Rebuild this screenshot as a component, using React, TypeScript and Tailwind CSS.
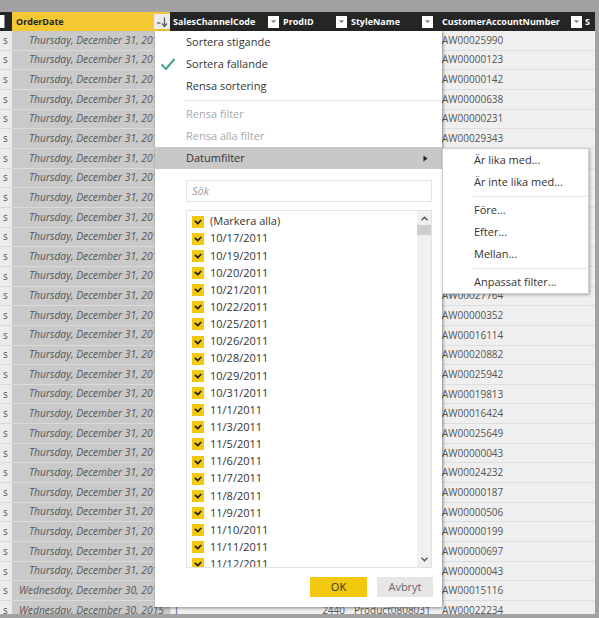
import React from 'react';

const FONT = "font-['Open_Sans',sans-serif]";

const CUSTOMERS = [
  'AW00025990', 'AW00000123', 'AW00000142', 'AW00000638', 'AW00000231', 'AW00029343',
  'AW00011235', 'AW00028854', 'AW00000412', 'AW00017719', 'AW00000566', 'AW00023017', 'AW00000098',
  'AW00027764', 'AW00000352', 'AW00016114', 'AW00020882', 'AW00025942', 'AW00019813', 'AW00016424',
  'AW00025649', 'AW00000043', 'AW00024232', 'AW00000187', 'AW00000506', 'AW00000199', 'AW00000697',
  'AW00000043', 'AW00015116', 'AW00022234',
];

const DATES = [
  '10/17/2011', '10/19/2011', '10/20/2011', '10/21/2011', '10/22/2011', '10/25/2011', '10/26/2011',
  '10/28/2011', '10/29/2011', '10/31/2011', '11/1/2011', '11/3/2011', '11/5/2011', '11/6/2011',
  '11/7/2011', '11/8/2011', '11/9/2011', '11/10/2011', '11/11/2011', '11/12/2011',
];

function DropButton() {
  return (
    <div className="w-[11px] h-[12px] bg-white flex items-center justify-center shrink-0">
      <svg viewBox="0 0 8 8" width="7" height="7" aria-hidden="true">
        <path d="M1 2.5h6L4 6Z" fill="#8a8a8a" />
      </svg>
    </div>
  );
}

function SortButton() {
  return (
    <div className="w-[16px] h-[15px] bg-[#ececec] flex items-center justify-center shrink-0">
      <svg viewBox="0 0 14 12" width="14" height="12" aria-hidden="true">
        <path d="M2 7h3.5" stroke="#555" strokeWidth="1.2" />
        <path d="M9.5 1.5v8" stroke="#555" strokeWidth="1.2" />
        <path d="M7 7.5l2.5 3 2.5-3" stroke="#555" strokeWidth="1.2" fill="none" />
      </svg>
    </div>
  );
}

function CheckBox() {
  return (
    <div className="w-[12px] h-[12px] bg-[#f2c811] flex items-center justify-center shrink-0">
      <svg viewBox="0 0 12 12" width="10" height="10" aria-hidden="true">
        <path d="M2.2 4.6l3.6 3.4 4-4.4" stroke="#1a1a1a" strokeWidth="2" fill="none" />
      </svg>
    </div>
  );
}

function Header() {
  return (
    <div className="flex h-[19px] bg-[#252525] text-white font-bold text-[9px] shrink-0">
      <div className="w-[12px] flex items-center">
        <div className="w-[5px] h-[13px] bg-white border-r border-[#888]" />
      </div>
      <div className="w-[158px] bg-[#f3c832] text-[#222] flex items-center pl-[4px]">
        <span className="flex-1">OrderDate</span>
        <SortButton />
      </div>
      <div className="w-[112px] flex items-center pl-[3px] pr-[3px]">
        <span className="flex-1">SalesChannelCode</span>
        <DropButton />
      </div>
      <div className="w-[66px] flex items-center pl-[1px] pr-[1px]">
        <span className="flex-1 overflow-hidden whitespace-nowrap">ProdID</span>
        <DropButton />
      </div>
      <div className="w-[89px] flex items-center pl-[3px] pr-[4px]">
        <span className="flex-1">StyleName</span>
        <DropButton />
      </div>
      <div className="w-[147px] flex items-center pl-[5px] pr-[2px]">
        <span className="flex-1 whitespace-nowrap">CustomerAccountNumber</span>
        <DropButton />
      </div>
      <div className="flex-1 flex items-center pl-[1px] overflow-hidden">S</div>
    </div>
  );
}

function Row({ i }: { i: number }) {
  const wed = i >= 28;
  return (
    <div className="flex h-[19.66px] shrink-0 text-[10px] text-[#555]">
      <div className="w-[12px] bg-[#ececec] border-b border-[#d9d9d9] flex items-center pl-[3px]">s</div>
      <div className="w-[158px] bg-[#c9c9c9] border-b border-[#dbdbdb] flex items-center justify-end pr-[6px] italic text-[10.3px] whitespace-nowrap overflow-hidden">
        {wed ? 'Wednesday, December 30, 2015' : 'Thursday, December 31, 2015'}
      </div>
      <div className="w-[112px] bg-[#efefef] border-b border-l border-[#dedede] flex items-center pl-[4px]">I</div>
      <div className="w-[66px] bg-[#efefef] border-b border-[#dedede] flex items-center justify-end pr-[3px]">2440</div>
      <div className="w-[89px] bg-[#efefef] border-b border-[#dedede] flex items-center pl-[6px]">Product0808031</div>
      <div className="w-[147px] bg-[#efefef] border-b border-[#dedede] flex items-center pl-[5px]">{CUSTOMERS[i]}</div>
      <div className="flex-1 bg-[#efefef] border-b border-[#dedede]" />
    </div>
  );
}

function MenuItem({ label, muted, check }: { label: string; muted?: boolean; check?: boolean }) {
  return (
    <div className={`h-[22px] flex items-center shrink-0 ${muted ? 'text-[#a8a8a8]' : 'text-[#333]'}`}>
      <div className="w-[31px] pl-[5px] flex items-center">
        {check && (
          <svg viewBox="0 0 16 14" width="16" height="14" aria-hidden="true">
            <path d="M1.5 7.5l4.5 4.5L14.5 2" stroke="#44a99a" strokeWidth="2.2" fill="none" />
          </svg>
        )}
      </div>
      <span>{label}</span>
    </div>
  );
}

function FilterPopup() {
  return (
    <div className="absolute left-[155px] top-[19px] w-[287px] h-[576px] bg-white shadow-[1px_1px_3px_rgba(0,0,0,0.45)] flex flex-col text-[11px]">
      <MenuItem label="Sortera stigande" />
      <MenuItem label="Sortera fallande" check />
      <MenuItem label="Rensa sortering" />
      <div className="h-[6px] flex items-center shrink-0">
        <div className="ml-[29px] mr-[2px] flex-1 h-px bg-[#e3e3e3]" />
      </div>
      <MenuItem label="Rensa filter" muted />
      <MenuItem label="Rensa alla filter" muted />
      <div className="h-[22px] bg-[#c8c8c8] flex items-center pl-[31px] pr-[14px] text-[#333] shrink-0">
        <span className="flex-1">Datumfilter</span>
        <svg viewBox="0 0 6 8" width="5" height="7" aria-hidden="true">
          <path d="M0.5 0.5L5.5 4L0.5 7.5Z" fill="#222" />
        </svg>
      </div>
      <div className="mt-[11px] ml-[31px] w-[246px] h-[22px] border border-[#e2e2e2] flex items-center pl-[5px] italic text-[#9a9a9a] shrink-0">
        Sök
      </div>
      <div className="mt-[8px] ml-[31px] w-[246px] h-[358px] border border-[#e2e2e2] flex shrink-0 overflow-hidden">
        <div className="flex-1 flex flex-col pt-[2px] overflow-hidden text-[#333]">
          {['(Markera alla)', ...DATES].map((d, i) => (
            <div key={i} className="h-[17.15px] flex items-center gap-[6px] pl-[5px] shrink-0">
              <CheckBox />
              <span>{d}</span>
            </div>
          ))}
        </div>
        <div className="w-[14px] bg-[#f0f0f0] flex flex-col items-center">
          <svg viewBox="0 0 10 8" width="9" height="7" className="mt-[4px]" aria-hidden="true">
            <path d="M1.5 6L5 2.5 8.5 6" stroke="#555" strokeWidth="1.6" fill="none" />
          </svg>
          <div className="mt-[3px] w-full h-[10px] bg-[#cdcdcd]" />
          <div className="flex-1" />
          <svg viewBox="0 0 10 8" width="9" height="7" className="mb-[4px]" aria-hidden="true">
            <path d="M1.5 2L5 5.5 8.5 2" stroke="#555" strokeWidth="1.6" fill="none" />
          </svg>
        </div>
      </div>
      <div className="mt-[9px] flex justify-end gap-[10px] pr-[9px] shrink-0">
        <div className="w-[57px] h-[20px] bg-[#f2c811] flex items-center justify-center text-[#333]">OK</div>
        <div className="w-[56px] h-[20px] bg-[#e6e6e6] flex items-center justify-center text-[#666]">Avbryt</div>
      </div>
    </div>
  );
}

function SubMenu() {
  const item = (label: string) => (
    <div className="h-[22px] flex items-center pl-[31px] text-[#333]">{label}</div>
  );
  const sep = (
    <div className="h-[6px] flex items-center">
      <div className="ml-[30px] mr-[1px] flex-1 h-px bg-[#e3e3e3]" />
    </div>
  );
  return (
    <div className="absolute left-[442px] top-[136px] w-[147px] h-[146px] bg-white border border-[#cfcfcf] shadow-[1px_1px_3px_rgba(0,0,0,0.3)] flex flex-col text-[11px]">
      {item('Är lika med...')}
      {item('Är inte lika med...')}
      {sep}
      {item('Före...')}
      {item('Efter...')}
      {item('Mellan...')}
      {sep}
      {item('Anpassat filter...')}
    </div>
  );
}

export default function App() {
  return (
    <div className={`w-[599px] h-[618px] bg-[#a2a2a2] pt-[12px] pr-[4px] pb-[4px] ${FONT}`}>
      <div className="relative w-[595px] h-[602px] bg-[#efefef] overflow-hidden flex flex-col">
        <Header />
        {CUSTOMERS.map((_, i) => (
          <Row key={i} i={i} />
        ))}
        <FilterPopup />
        <SubMenu />
      </div>
    </div>
  );
}
